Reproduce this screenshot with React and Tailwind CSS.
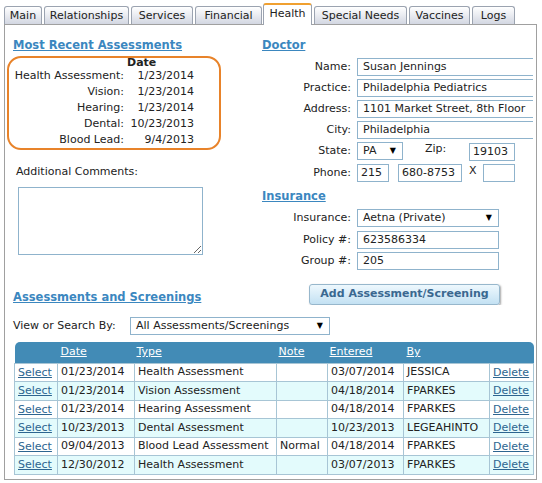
import { useState } from "react";

const tabs = [
  ["Main", "w-[38px]"],
  ["Relationships", "w-[85px]"],
  ["Services", "w-[62px]"],
  ["Financial", "w-[67px]"],
  ["Health", "w-[49px]"],
  ["Special Needs", "w-[93px]"],
  ["Vaccines", "w-[61px]"],
  ["Logs", "w-[43px]"],
];

const recent = [
  ["Health Assessment:", "1/23/2014"],
  ["Vision:", "1/23/2014"],
  ["Hearing:", "1/23/2014"],
  ["Dental:", "10/23/2013"],
  ["Blood Lead:", "9/4/2013"],
];

const rows = [
  ["01/23/2014", "Health Assessment", "", "03/07/2014", "JESSICA"],
  ["01/23/2014", "Vision Assessment", "", "04/18/2014", "FPARKES"],
  ["01/23/2014", "Hearing Assessment", "", "04/18/2014", "FPARKES"],
  ["10/23/2013", "Dental Assessment", "", "10/23/2013", "LEGEAHINTO"],
  ["09/04/2013", "Blood Lead Assessment", "Normal", "04/18/2014", "FPARKES"],
  ["12/30/2012", "Health Assessment", "", "03/07/2013", "FPARKES"],
];

function Heading({ children, className = "" }) {
  return (
    <div className={"text-[11.5px] leading-[16px] font-bold text-[#3b87bf] underline " + className}>
      {children}
    </div>
  );
}

function Field({ label, value, width = "w-[185px]" }) {
  return (
    <div className="flex items-center h-[18px] mb-[3px]">
      <div className="w-[89px] shrink-0 text-right">{label}</div>
      <div className={"ml-[6px] h-[18px] border border-[#8fb3cc] pl-[5px] leading-[16px] whitespace-nowrap overflow-hidden shrink-0 " + width}>
        {value}
      </div>
    </div>
  );
}

function Box({ value, className = "" }) {
  return (
    <div className={"h-[18px] border border-[#8fb3cc] pl-[3px] leading-[16px] shrink-0 " + className}>{value}</div>
  );
}

function Select({ value, className = "" }) {
  return (
    <div className={"h-[18px] border border-[#8fb3cc] pl-[5px] pr-[6px] leading-[16px] flex justify-between items-center shrink-0 " + className}>
      <span>{value}</span>
      <span className="text-[8px] text-black">▼</span>
    </div>
  );
}

function App() {
  const [active] = useState("Health");
  return (
    <div className="w-[542px] h-[483px] bg-white font-['DejaVu_Sans',sans-serif] text-[11px] text-[#222]">
      <div className="flex items-end gap-[2px] pl-[4px] h-[24px]">
        {tabs.map(([t, w]) =>
          t === active ? (
            <div key={t} className={"relative z-10 -mb-px -ml-px h-[22px] text-center bg-white border border-[#9ba3b0] border-t-2 border-t-[#f0a030] border-b-0 rounded-t-[3px] leading-[18px] " + w}>
              {t}
            </div>
          ) : (
            <div key={t} className={"h-[18px] text-center border border-[#9ba3b0] border-b-0 rounded-t-[3px] bg-gradient-to-b from-white to-[#d3d7e2] leading-[17px] " + w}>
              {t}
            </div>
          )
        )}
      </div>

      <div className="ml-[4px] w-[533px] h-[456px] border border-[#a0a0a0] overflow-hidden">
        <div className="flex">
          <div className="w-[248px] shrink-0">
            <Heading className="ml-[8px] mt-[12px]">Most Recent Assessments</Heading>
            <div className="ml-[2px] mt-[3px] w-[214px] h-[94px] border-2 border-[#e8832a] rounded-[14px]">
              <div className="grid grid-cols-[117px_68px]">
                <div className="leading-[10px]"></div>
                <div className="leading-[10px] font-bold pl-[1px] text-[11px]">Date</div>
                {recent.map(([l, v]) => (
                  <div key={l} className="contents">
                    <div className="text-right leading-[16px] pr-[2px]">{l}</div>
                    <div className="text-right leading-[16px]">{v}</div>
                  </div>
                ))}
              </div>
            </div>
            <div className="ml-[11px] mt-[15px] leading-[14px]">Additional Comments:</div>
            <textarea className="block ml-[13px] mt-[8px] w-[185px] h-[68px] border border-[#8fb3cc] outline-none" />
            <Heading className="ml-[8px] mt-[34px]">Assessments and Screenings</Heading>
          </div>

          <div className="w-[280px] shrink-0 pl-[9px] overflow-hidden">
            <Heading className="mt-[12px]">Doctor</Heading>
            <div className="mt-[5px]">
              <Field label="Name:" value="Susan Jennings" />
              <Field label="Practice:" value="Philadelphia Pediatrics" />
              <Field label="Address:" value="1101 Market Street, 8th Floor" />
              <Field label="City:" value="Philadelphia" />
              <div className="flex items-center h-[18px] mb-[4px]">
                <div className="w-[89px] shrink-0 text-right">State:</div>
                <Select value="PA" className="ml-[6px] w-[46px]" />
                <div className="ml-[22px] -mt-[4px] w-[44px] shrink-0">Zip:</div>
                <Box value="19103" className="w-[46px] mt-[2px]" />
              </div>
              <div className="flex items-center h-[18px]">
                <div className="w-[89px] shrink-0 text-right">Phone:</div>
                <Box value="215" className="ml-[6px] w-[32px]" />
                <Box value="680-8753" className="ml-[9px] w-[64px]" />
                <div className="ml-[7px] w-[14px] shrink-0 -mt-[3px]">X</div>
                <Box value="" className="w-[32px]" />
              </div>
            </div>
            <Heading className="mt-[6px]">Insurance</Heading>
            <div className="mt-[5px]">
              <div className="flex items-center h-[18px] mb-[4px]">
                <div className="w-[89px] shrink-0 text-right">Insurance:</div>
                <Select value="Aetna (Private)" className="ml-[6px] w-[142px]" />
              </div>
              <Field label="Policy #:" value="623586334" width="w-[142px]" />
              <Field label="Group #:" value="205" width="w-[142px]" />
            </div>
            <button className="block ml-[47px] mt-[14px] w-[191px] h-[21px] rounded-[3px] border border-[#97b7cc] bg-gradient-to-b from-[#eef8fd] to-[#c3e1f3] shadow-[1px_1px_2px_rgba(0,0,0,0.35)] font-bold text-[#3a6890] text-[11px]">
              Add Assessment/Screening
            </button>
          </div>
        </div>

        <div className="flex items-center ml-[8px] mt-[12px]">
          <div className="w-[117px]">View or Search By:</div>
          <Select value="All Assessments/Screenings" className="w-[200px]" />
        </div>

        <div className="ml-[9px] mt-[7px] w-[519px]">
          <table className="table-fixed border-collapse w-[519px]">
            <colgroup>
              <col className="w-[43px]" />
              <col className="w-[77px]" />
              <col className="w-[142px]" />
              <col className="w-[51px]" />
              <col className="w-[76px]" />
              <col className="w-[86px]" />
              <col className="w-[44px]" />
            </colgroup>
            <thead>
              <tr className="h-[21px] bg-[#428bb6] text-white text-left">
                <th className="font-normal rounded-tl-[5px]"></th>
                <th className="font-normal px-[3px] underline">Date</th>
                <th className="font-normal px-[2px] underline">Type</th>
                <th className="font-normal px-[2px] underline">Note</th>
                <th className="font-normal px-[2px] underline">Entered</th>
                <th className="font-normal px-[3px] underline">By</th>
                <th className="font-normal rounded-tr-[5px]"></th>
              </tr>
            </thead>
            <tbody>
              {rows.map((r, i) => (
                <tr key={i} className={"h-[18px] " + (i % 2 === 1 ? "bg-[#e3fbfc]" : "bg-white")}>
                  <td className="border border-[#a7c5d5] px-[3px] pt-[1px] text-[#2d6590] underline">Select</td>
                  {r.map((c, j) => (
                    <td key={j} className="border border-[#a7c5d5] px-[3px] whitespace-nowrap overflow-hidden">{c}</td>
                  ))}
                  <td className="border border-[#a7c5d5] px-[3px] pt-[1px] text-[#2d6590] underline">Delete</td>
                </tr>
              ))}
            </tbody>
          </table>
        </div>
      </div>
    </div>
  );
}

export default App;
